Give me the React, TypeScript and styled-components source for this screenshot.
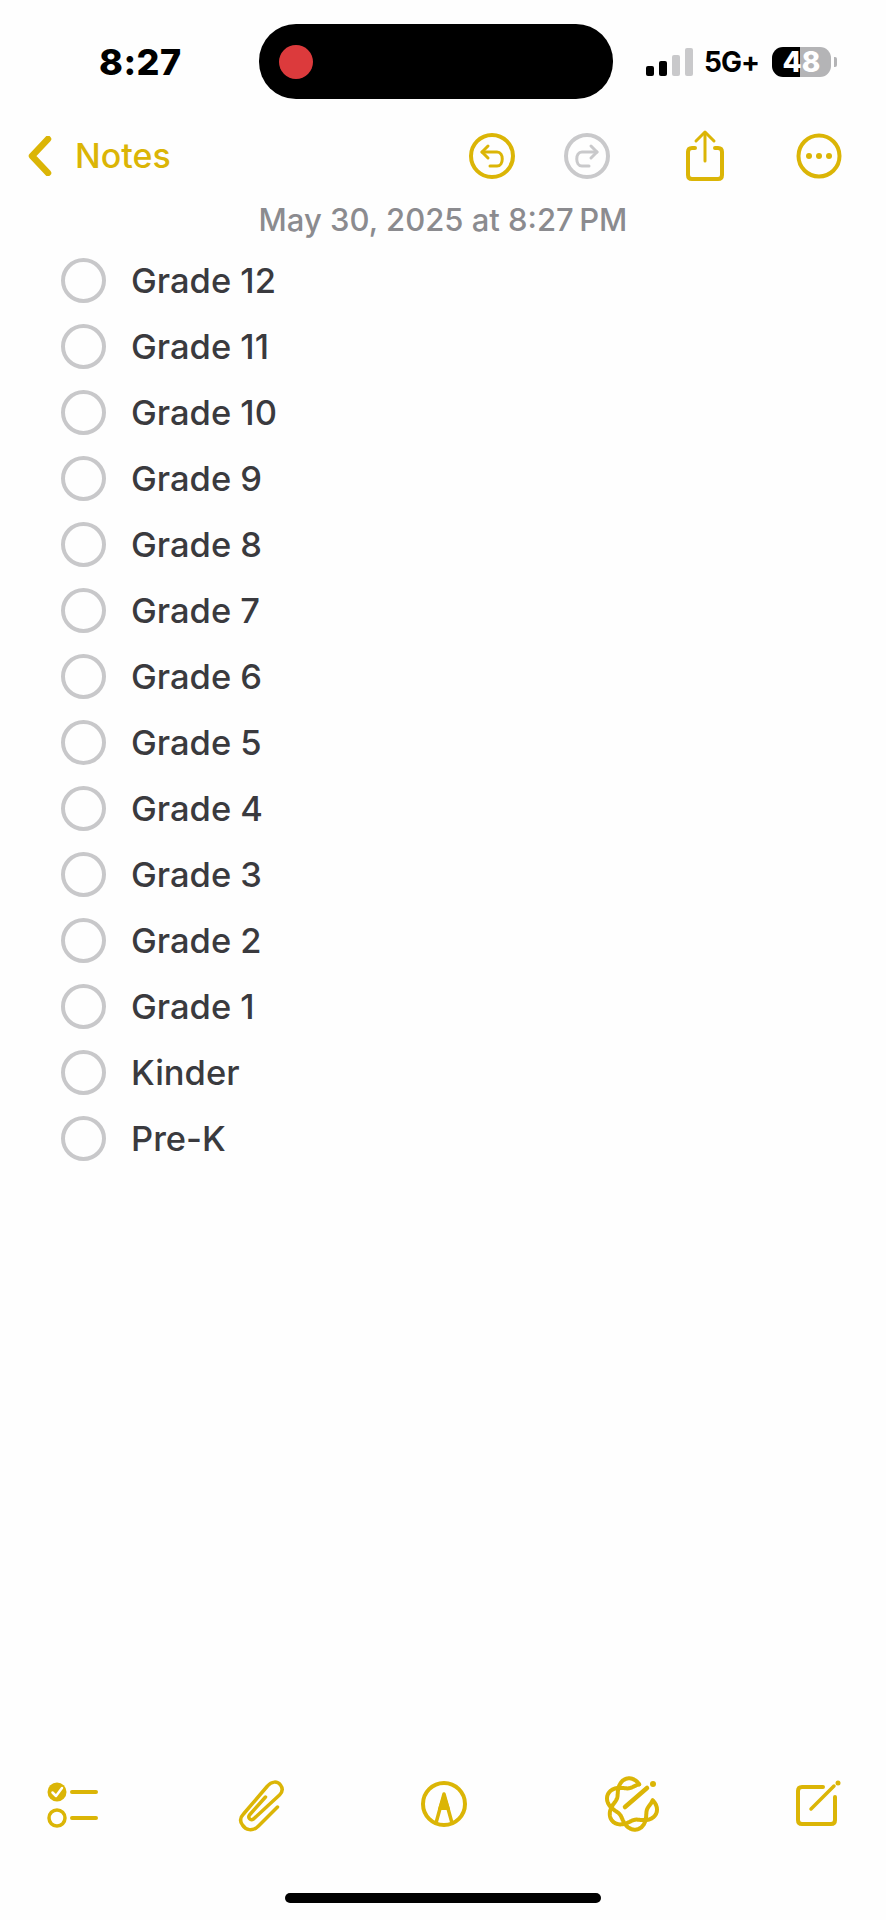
import styled, { createGlobalStyle } from "styled-components"

const YELLOW = "#dbb506"
const FADED = "#c9c9cb"

const grades = [
  "Grade 12", "Grade 11", "Grade 10", "Grade 9", "Grade 8", "Grade 7", "Grade 6",
  "Grade 5", "Grade 4", "Grade 3", "Grade 2", "Grade 1", "Kinder", "Pre-K",
]

// Styles
const GlobalStyle = createGlobalStyle`
  html, body {
    margin: 0;
    padding: 0;
    background: #fefefe;
  }
  body {
    font-family: Inter, "Liberation Sans", sans-serif;
  }
`
const Screen = styled.div`
  width: 886px;
  height: 1920px;
  display: flex;
  flex-direction: column;
  overflow: hidden;
  background: #fefefe;
`
const StatusBar = styled.div`
  display: flex;
  align-items: center;
  padding: 24px 0 7px 99px;
`
const Time = styled.div`
  width: 160px;
  color: #000;
  font-size: 36px;
  font-weight: 800;
  letter-spacing: 0.5px;
  line-height: 40px;
`
const Island = styled.div`
  width: 354px;
  height: 75px;
  display: flex;
  align-items: center;
  padding-left: 20px;
  box-sizing: border-box;
  background: #000;
  border-radius: 37px;
`
const RecordDot = styled.span`
  width: 34px;
  height: 34px;
  background: #dc3a3c;
  border-radius: 50%;
`
const StatusRight = styled.div`
  display: flex;
  align-items: center;
  margin-left: 33px;
`
const Signal = styled.div`
  display: flex;
  align-items: flex-end;
  gap: 5px;
  height: 28px;
`
const SignalBar = styled.span<{ $height: number; $off?: boolean }>`
  width: 8px;
  height: ${p => p.$height}px;
  background: ${p => (p.$off ? FADED : "#000")};
  border-radius: 2px;
`
const Network = styled.div`
  margin-left: 11px;
  color: #000;
  font-size: 28px;
  font-weight: 700;
  letter-spacing: -1px;
  line-height: 30px;
`
const Battery = styled.div`
  width: 59px;
  height: 30px;
  margin-left: 13px;
  background: linear-gradient(90deg, #000 48%, #b4b4b6 48%);
  border-radius: 11px;
  color: #fff;
  font-size: 28px;
  font-weight: 800;
  line-height: 30px;
  text-align: center;
`
const BatteryNub = styled.span`
  width: 3px;
  height: 10px;
  margin-left: 3px;
  background: #b4b4b6;
  border-radius: 0 2px 2px 0;
`
const NavBar = styled.div`
  height: 99px;
  display: flex;
  align-items: center;
  padding: 0 44px 0 28px;
`
const BackButton = styled.div`
  display: flex;
  align-items: center;
  gap: 23px;
  color: ${YELLOW};
  font-size: 34px;
  font-weight: 500;
`
const NavActions = styled.div`
  display: flex;
  align-items: center;
  margin-left: auto;
`
const NavAction = styled.span<{ $gap?: number }>`
  display: flex;
  margin-left: ${p => p.$gap || 0}px;
`
const DateLine = styled.div`
  height: 30px;
  color: #8b8b8f;
  font-size: 31px;
  font-weight: 500;
  line-height: 30px;
  text-align: center;
`
const ChecklistWrap = styled.ul`
  list-style: none;
  margin: 12px 0 0;
  padding: 0 0 0 61px;
`
const ChecklistRow = styled.li`
  height: 66px;
  display: flex;
  align-items: center;
  gap: 25px;
  color: #3a3a3e;
  font-size: 34.5px;
  font-weight: 500;
`
const CheckCircle = styled.span`
  width: 45px;
  height: 45px;
  box-sizing: border-box;
  border: 4px solid #c8c8ca;
  border-radius: 50%;
`
const Toolbar = styled.div`
  margin-top: auto;
  display: flex;
  justify-content: space-between;
  padding: 0 40px 0 44px;
`
const HomeBar = styled.div`
  width: 316px;
  height: 10px;
  margin: 61px auto 17px;
  background: #000;
  border-radius: 5px;
`
const IconSvg = styled.svg<{ $color?: string }>`
  display: block;
  fill: none;
  stroke: ${p => p.$color || YELLOW};
  stroke-width: 4;
  stroke-linecap: round;
  stroke-linejoin: round;
`

// the twisted ribbon of the writing tools icon
const ribbon = (sign: number) => {
  const points: string[] = []
  for (let i = 0; i <= 120; i++) {
    const deg = -70 - (300 * i) / 120
    const rad = (deg * Math.PI) / 180
    const r = 21 + sign * 5 * Math.sin(3 * ((deg + 70) * Math.PI) / 180)
    points.push(`${(28 + r * Math.cos(rad)).toFixed(1)} ${(28 + r * Math.sin(rad)).toFixed(1)}`)
  }
  return "M" + points.join("L")
}

const ChevronIcon = () => (
  <IconSvg width="24" height="40" viewBox="0 0 24 40" style={{ strokeWidth: 6.5 }}>
    <path d="M20 3 L4 20 L20 37" />
  </IconSvg>
)
const UndoIcon = ({ flip, color }: { flip?: boolean; color?: string }) => (
  <IconSvg width="50" height="50" viewBox="0 0 50 50" $color={color}>
    <circle cx="25" cy="25" r="21" />
    <g transform={flip ? "translate(50 0) scale(-1 1)" : undefined} strokeWidth="3">
      <path d="M21 15 L15 21 L21 27" />
      <path d="M15 21 H30 C37 21 37 35 30 35 H23" />
    </g>
  </IconSvg>
)
const ShareIcon = () => (
  <IconSvg width="46" height="54" viewBox="0 0 46 54">
    <path d="M13 19 H10 Q6 19 6 23 V46 Q6 50 10 50 H36 Q40 50 40 46 V23 Q40 19 36 19 H33" />
    <path d="M23 4 V32" strokeWidth="3" />
    <path d="M14 12 L23 3 L32 12" strokeWidth="3" />
  </IconSvg>
)
const MoreIcon = () => (
  <IconSvg width="46" height="46" viewBox="0 0 46 46">
    <circle cx="23" cy="23" r="20.5" />
    <g fill={YELLOW} stroke="none">
      <circle cx="13" cy="23" r="3" />
      <circle cx="23" cy="23" r="3" />
      <circle cx="33" cy="23" r="3" />
    </g>
  </IconSvg>
)
const ChecklistIcon = () => (
  <IconSvg width="56" height="56" viewBox="0 0 56 56">
    <circle cx="13" cy="16" r="9.5" fill={YELLOW} stroke="none" />
    <path d="M8.5 16.5 L12 20 L18 12" stroke="#fff" strokeWidth="2.5" />
    <circle cx="13" cy="42" r="8" strokeWidth="3.5" />
    <path d="M28 16 H52 M28 42 H52" />
  </IconSvg>
)
const ClipIcon = () => (
  <IconSvg width="56" height="56" viewBox="0 0 56 56" style={{ strokeWidth: 3.5 }}>
    <path
      transform="translate(5.5 2)"
      d="M41 29 L22 48 C16 54 9 52 6 47 C3 43 4 39 7 36 L31 8 C35 3 41 3 44 7 C47 11 46 14 43 17 L17 41 C14 43 11 40 13 37 L29 19"
    />
  </IconSvg>
)
const MarkupIcon = () => (
  <IconSvg width="56" height="56" viewBox="0 0 56 56">
    <circle cx="27" cy="28" r="21" />
    <path d="M19 47 L27 18 L35 47" strokeWidth="3.5" />
    <path d="M27 18 L32 33 H22 Z" fill={YELLOW} strokeWidth="2" />
  </IconSvg>
)
const WritingToolsIcon = () => (
  <IconSvg width="56" height="56" viewBox="0 0 56 56" style={{ strokeWidth: 4 }}>
    <path d={ribbon(1)} />
    <path d={ribbon(-1)} />
    <path d="M21 31 L43 12" strokeWidth="4.5" />
    <circle cx="49" cy="8" r="3" fill={YELLOW} stroke="none" />
  </IconSvg>
)
const ComposeIcon = () => (
  <IconSvg width="56" height="56" viewBox="0 0 56 56">
    <path d="M33 11 H12 Q8 11 8 15 V44 Q8 48 12 48 H41 Q45 48 45 44 V21" />
    <path d="M21 33 L44 10" strokeWidth="3.5" />
    <circle cx="48" cy="7" r="2.5" fill={YELLOW} stroke="none" />
  </IconSvg>
)

const App = () => (
  <Screen>
    <GlobalStyle />
    <StatusBar>
      <Time>8:27</Time>
      <Island>
        <RecordDot />
      </Island>
      <StatusRight>
        <Signal>
          <SignalBar $height={10} />
          <SignalBar $height={15} />
          <SignalBar $height={21} $off />
          <SignalBar $height={28} $off />
        </Signal>
        <Network>5G+</Network>
        <Battery>48</Battery>
        <BatteryNub />
      </StatusRight>
    </StatusBar>
    <NavBar>
      <BackButton>
        <ChevronIcon />
        Notes
      </BackButton>
      <NavActions>
        <NavAction><UndoIcon /></NavAction>
        <NavAction $gap={45}><UndoIcon flip color={FADED} /></NavAction>
        <NavAction $gap={70}><ShareIcon /></NavAction>
        <NavAction $gap={68}><MoreIcon /></NavAction>
      </NavActions>
    </NavBar>
    <DateLine>May 30, 2025 at 8:27{"\u2009"}PM</DateLine>
    <ChecklistWrap>
      {grades.map(grade => (
        <ChecklistRow key={grade}>
          <CheckCircle />
          {grade}
        </ChecklistRow>
      ))}
    </ChecklistWrap>
    <Toolbar>
      <ChecklistIcon />
      <ClipIcon />
      <MarkupIcon />
      <WritingToolsIcon />
      <ComposeIcon />
    </Toolbar>
    <HomeBar />
  </Screen>
)

export default App
